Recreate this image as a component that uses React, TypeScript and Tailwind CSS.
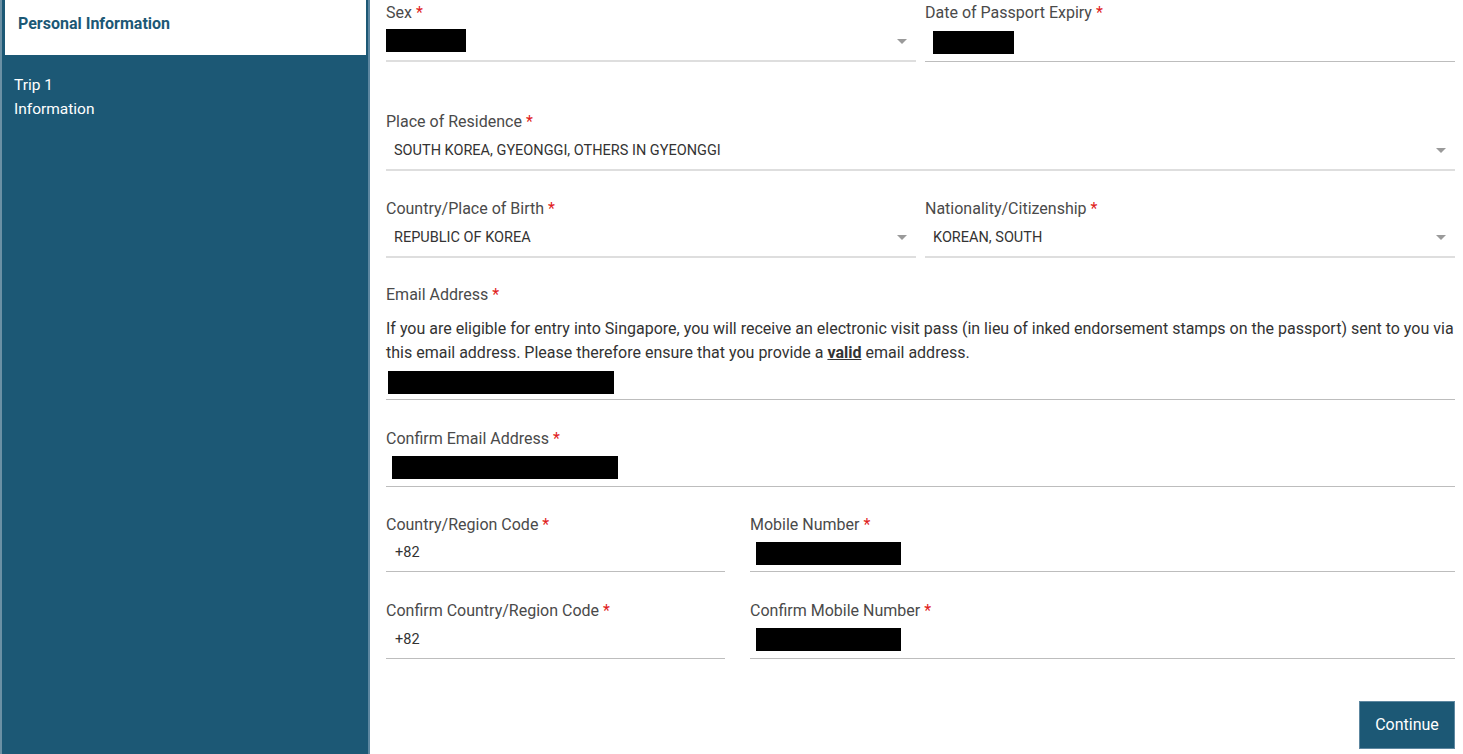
import React from "react";

const Star = () => <span className="text-[#e02020] ml-[4px]">*</span>;

function Label({ children }: { children: React.ReactNode }) {
  return (
    <div className="h-[20px] leading-[20px] text-[16px] text-[#4a4a4a]">
      {children}
      <Star />
    </div>
  );
}

const Caret = () => (
  <svg width="10" height="5" viewBox="0 0 10 5" className="shrink-0">
    <path d="M0 0 L10 0 L5 5 Z" fill="#9a9a9a" />
  </svg>
);

function SelectBox({ children, h = 39 }: { children?: React.ReactNode; h?: number }) {
  return (
    <div
      className="flex items-center justify-between border-b-2 border-[#dedede] pr-[9px]"
      style={{ height: h }}
    >
      <div className="text-[14.5px] text-[#333] uppercase">{children}</div>
      <Caret />
    </div>
  );
}

function TextBox({ children, h = 39 }: { children?: React.ReactNode; h?: number }) {
  return (
    <div className="flex items-center border-b border-[#bdbdbd]" style={{ height: h }}>
      {children}
    </div>
  );
}

const Redact = ({ w, ml = 0 }: { w: number; ml?: number }) => (
  <div className="bg-black h-[23px]" style={{ width: w, marginLeft: ml }} />
);

export default function App() {
  return (
    <div
      className="flex w-[1463px] h-[754px] bg-white overflow-hidden"
      style={{ fontFamily: "Roboto, 'Liberation Sans', sans-serif" }}
    >
      <aside className="w-[370px] shrink-0 h-full bg-[#1c5875] border-l-2 border-[#6b90a4] border-r-2 border-r-[#5d87a0] pl-[3px] pr-[2px]">
        <div className="bg-white h-[55px] pl-[13px] pt-[12px]">
          <span className="text-[16px] font-bold text-[#1c5875] leading-[20px]">Personal Information</span>
        </div>
        <div className="pl-[9px] pt-[18px] text-[15.5px] leading-[24px] text-white">
          <div>Trip 1</div>
          <div>Information</div>
        </div>
      </aside>

      <main className="flex-1 pl-[16px] pr-[8px] pt-[3px]">
        <div className="flex gap-[9px]">
          <div className="flex-1">
            <Label>Sex</Label>
            <SelectBox>
              <div className="mt-[-2px]">
                <Redact w={80} />
              </div>
            </SelectBox>
          </div>
          <div className="flex-1">
            <Label>Date of Passport Expiry</Label>
            <TextBox>
              <Redact w={81} ml={8} />
            </TextBox>
          </div>
        </div>

        <div className="mt-[50px]">
          <Label>Place of Residence</Label>
          <SelectBox>
            <span className="pl-[8px]">SOUTH KOREA, GYEONGGI, OTHERS IN GYEONGGI</span>
          </SelectBox>
        </div>

        <div className="flex gap-[9px] mt-[28px]">
          <div className="flex-1">
            <Label>Country/Place of Birth</Label>
            <SelectBox>
              <span className="pl-[8px]">REPUBLIC OF KOREA</span>
            </SelectBox>
          </div>
          <div className="flex-1">
            <Label>Nationality/Citizenship</Label>
            <SelectBox>
              <span className="pl-[8px]">KOREAN, SOUTH</span>
            </SelectBox>
          </div>
        </div>

        <div className="mt-[27px]">
          <Label>Email Address</Label>
          <p className="mt-[12px] text-[16px] leading-[24px] text-[#333]">
            If you are eligible for entry into Singapore, you will receive an electronic visit pass (in lieu of inked
            endorsement stamps on the passport) sent to you via this email address. Please therefore ensure that you
            provide a <span className="font-bold underline">valid</span> email address.
          </p>
          <TextBox h={35}>
            <Redact w={226} ml={2} />
          </TextBox>
        </div>

        <div className="mt-[29px]">
          <Label>Confirm Email Address</Label>
          <TextBox h={38}>
            <Redact w={226} ml={6} />
          </TextBox>
        </div>

        <div className="flex gap-[25px] mt-[28px]">
          <div className="w-[339px]">
            <Label>Country/Region Code</Label>
            <TextBox h={37}>
              <span className="pl-[9px] text-[14.5px] text-[#333]">+82</span>
            </TextBox>
          </div>
          <div className="flex-1">
            <Label>Mobile Number</Label>
            <TextBox h={37}>
              <Redact w={145} ml={6} />
            </TextBox>
          </div>
        </div>

        <div className="flex gap-[25px] mt-[29px]">
          <div className="w-[339px]">
            <Label>Confirm Country/Region Code</Label>
            <TextBox h={38}>
              <span className="pl-[9px] text-[14.5px] text-[#333]">+82</span>
            </TextBox>
          </div>
          <div className="flex-1">
            <Label>Confirm Mobile Number</Label>
            <TextBox h={38}>
              <Redact w={145} ml={6} />
            </TextBox>
          </div>
        </div>

        <div className="flex justify-end mt-[42px]">
          <button className="w-[96px] h-[48px] bg-[#1c5875] text-white text-[16px] border border-[#5d87a0]">
            Continue
          </button>
        </div>
      </main>
    </div>
  );
}
